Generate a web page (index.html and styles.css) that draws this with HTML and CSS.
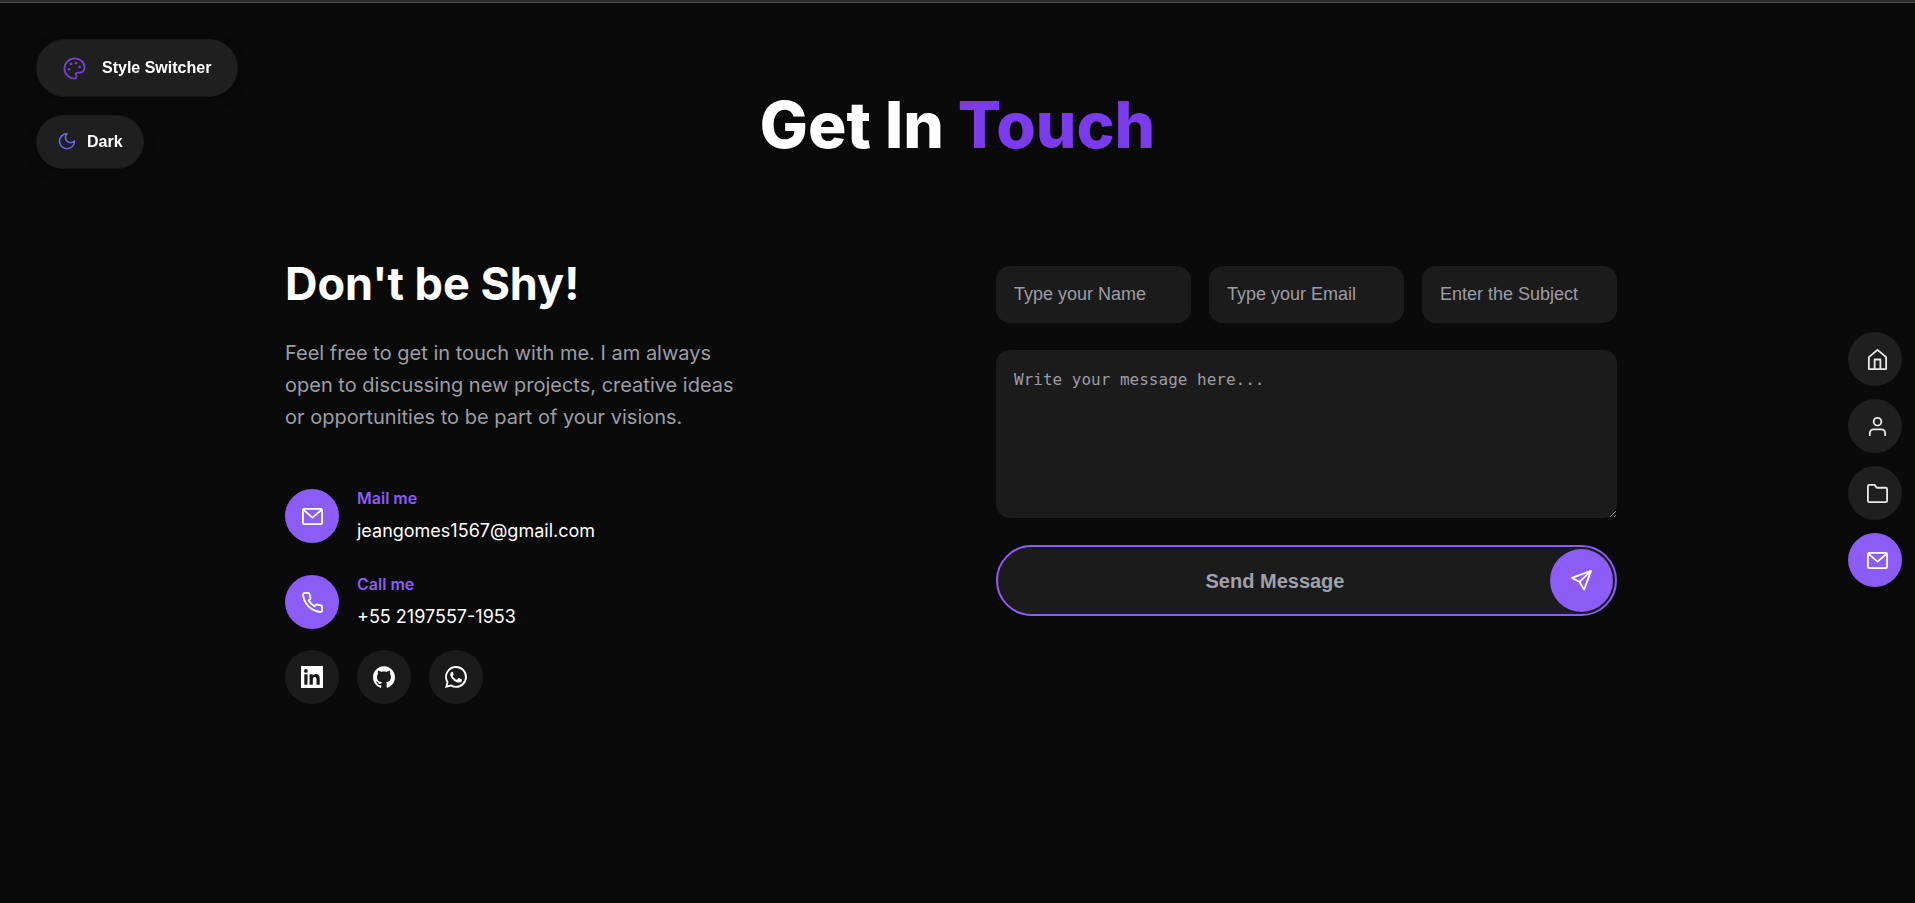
FILE: index.html
```html
<!DOCTYPE html>
<html lang="en">
<head>
<meta charset="utf-8">
<meta name="viewport" content="width=device-width, initial-scale=1">
<title>Get In Touch</title>
<link rel="stylesheet" href="styles.css">
</head>
<body>
<div class="topbar"></div>

<div class="toggles">
  <button class="toggle toggle-style" type="button">
    <svg class="icon" viewBox="0 0 24 24" aria-hidden="true"><path d="M12 22.500C6.500 22.500 1.500 18 1.500 12S6.500 1.500 12 1.500s10.500 4 10.500 9.500c0 3.200-2.300 5.300-5.500 5.300h-2c-1.500 0-2.200 1.200-1.400 2.400.9 1.400.5 3.800-1.600 3.800z"/><circle class="dot" cx="13.500" cy="6.300" r="1"/><circle class="dot" cx="17.300" cy="10.500" r="1"/><circle class="dot" cx="8.200" cy="7.300" r="1"/><circle class="dot" cx="6.300" cy="12.800" r="1"/></svg>
    <span>Style Switcher</span>
  </button>
  <button class="toggle toggle-theme" type="button">
    <svg class="icon icon-small" viewBox="0 0 24 24" aria-hidden="true"><path d="M12 2a6 6 0 0 0 9 9 9 9 0 1 1-9-9z"/></svg>
    <span>Dark</span>
  </button>
</div>

<main class="contact">
  <h1 class="title">Get In <span class="accent">Touch</span></h1>
  <div class="columns">
    <section class="info">
      <h2 class="subtitle">Don't be Shy!</h2>
      <p class="intro">Feel free to get in touch with me. I am always open to discussing new projects, creative ideas or opportunities to be part of your visions.</p>
      <div class="details">
        <div class="detail">
          <span class="badge"><svg class="icon" viewBox="0 0 24 24" aria-hidden="true"><rect x="2" y="4" width="20" height="16" rx="1.500"/><path d="M2.500 5 12 13.200 21.500 5"/></svg></span>
          <div class="detail-text">
            <span class="detail-label">Mail me</span>
            <span class="detail-value">jeangomes1567@gmail.com</span>
          </div>
        </div>
        <div class="detail">
          <span class="badge"><svg class="icon" viewBox="0 0 24 24" aria-hidden="true"><path d="M22 16.920v3a2 2 0 0 1-2.180 2 19.790 19.790 0 0 1-8.630-3.070 19.500 19.500 0 0 1-6-6 19.790 19.790 0 0 1-3.070-8.670A2 2 0 0 1 4.110 2h3a2 2 0 0 1 2 1.720c.127.960.361 1.903.7 2.810a2 2 0 0 1-.45 2.110L8.090 9.910a16 16 0 0 0 6 6l1.270-1.270a2 2 0 0 1 2.110-.45c.907.339 1.850.573 2.810.7A2 2 0 0 1 22 16.920z"/></svg></span>
          <div class="detail-text">
            <span class="detail-label">Call me</span>
            <span class="detail-value">+55 2197557-1953</span>
          </div>
        </div>
      </div>
      <div class="socials">
        <a class="social" href="#linkedin" aria-label="LinkedIn"><svg class="brand" viewBox="0 0 24 24" aria-hidden="true"><path fill-rule="evenodd" d="M.5 0h23a.5.5 0 0 1 .5.5v23a.5.5 0 0 1-.5.5H.5a.5.5 0 0 1-.5-.5V.5A.5.5 0 0 1 .5 0zM3.600 9v11.500h3.500V9zM5.340 3.300a2.060 2.060 0 1 0 0 4.120 2.060 2.060 0 0 0 0-4.120zM9.350 9v11.450h3.560v-5.600c0-1.500.3-2.900 2.100-2.900s1.880 1.700 1.880 3v5.500h3.560v-6.300c0-3.100-.7-5.430-4.270-5.430-1.700 0-2.850.93-3.320 1.820h-.05V9z"/></svg></a>
        <a class="social" href="#github" aria-label="GitHub"><svg class="brand" viewBox="0 0 24 24" aria-hidden="true"><path d="M12 .297c-6.630 0-12 5.373-12 12 0 5.303 3.438 9.800 8.205 11.385.6.113.82-.258.82-.577 0-.285-.01-1.040-.015-2.040-3.338.724-4.042-1.610-4.042-1.610C4.422 18.070 3.633 17.700 3.633 17.700c-1.087-.744.084-.729.084-.729 1.205.084 1.838 1.236 1.838 1.236 1.070 1.835 2.809 1.305 3.495.998.108-.776.417-1.305.76-1.605-2.665-.3-5.466-1.332-5.466-5.930 0-1.310.465-2.380 1.235-3.220-.135-.303-.54-1.523.105-3.176 0 0 1.005-.322 3.300 1.230.96-.267 1.980-.399 3-.405 1.020.006 2.040.138 3 .405 2.280-1.552 3.285-1.230 3.285-1.230.645 1.653.24 2.873.12 3.176.765.840 1.230 1.910 1.230 3.220 0 4.610-2.805 5.625-5.475 5.920.42.360.81 1.096.81 2.220 0 1.606-.015 2.896-.015 3.286 0 .315.21.690.825.570C20.565 22.092 24 17.592 24 12.297c0-6.627-5.373-12-12-12"/></svg></a>
        <a class="social" href="#whatsapp" aria-label="WhatsApp"><svg class="brand" viewBox="0 0 24 24" aria-hidden="true"><path fill-rule="evenodd" d="M12.050 0C5.500 0 .16 5.340.16 11.900c0 2.100.55 4.140 1.590 5.940L0 24l6.300-1.650a11.900 11.900 0 0 0 5.700 1.450c6.600 0 11.940-5.340 11.940-11.900A11.900 11.900 0 0 0 12.050 0zm0 2.100a9.800 9.800 0 1 1-.05 19.600c-1.800 0-3.500-.5-5.030-1.400l-.36-.2-3.740.98 1-3.650-.24-.37A9.800 9.800 0 0 1 12.050 2.100z"/><path d="M7.900 6.300c-.3 0-.7.100-1 .5-.4.400-1.200 1.200-1.200 2.600 0 1.500 1 3 1.300 3.300 2.300 3.300 5 4.900 8 5.400 1.500.1 3-.8 3.300-1.800.3-.9.300-1.400.1-1.600l-3.100-1.500c-.4-.1-.6-.1-.8.2l-1.100 1.400c-.3.300-.5.200-.8.100-2-.9-3.400-2.300-4.200-3.700-.1-.3 0-.5.200-.7.500-.6.900-1 .8-1.500L8.700 6.800c-.2-.4-.5-.5-.8-.5z"/></svg></a>
      </div>
    </section>

    <form class="form">
      <div class="fields">
        <input class="field" type="text" placeholder="Type your Name" aria-label="Name">
        <input class="field" type="email" placeholder="Type your Email" aria-label="Email">
        <input class="field" type="text" placeholder="Enter the Subject" aria-label="Subject">
      </div>
      <textarea class="message" placeholder="Write your message here..." aria-label="Message"></textarea>
      <button class="send" type="submit">
        <span class="send-label">Send Message</span>
        <span class="send-icon"><svg class="icon" viewBox="0 0 24 24" aria-hidden="true"><path d="M22 2 2 9.200l8 4.300L14.700 21.500zM22 2 10 13.500"/></svg></span>
      </button>
    </form>
  </div>
</main>

<nav class="nav" aria-label="Sections">
  <a class="nav-link" href="#home" aria-label="Home"><svg class="icon" viewBox="0 0 24 24" aria-hidden="true"><path d="M3 22V9.500L12 2l9 7.500V22zM9 22V12h6v10"/></svg></a>
  <a class="nav-link" href="#about" aria-label="About"><svg class="icon" viewBox="0 0 24 24" aria-hidden="true"><path d="M20 21v-2a4 4 0 0 0-4-4H8a4 4 0 0 0-4 4v2"/><circle cx="12" cy="7" r="4"/></svg></a>
  <a class="nav-link" href="#portfolio" aria-label="Portfolio"><svg class="icon" viewBox="0 0 24 24" aria-hidden="true"><path d="M22 19.500a1.500 1.500 0 0 1-1.500 1.500h-17A1.500 1.500 0 0 1 2 19.500v-15A1.500 1.500 0 0 1 3.500 3H9l2.200 3h9.300A1.500 1.500 0 0 1 22 7.500z"/></svg></a>
  <a class="nav-link is-active" href="#contact" aria-label="Contact" aria-current="page"><svg class="icon" viewBox="0 0 24 24" aria-hidden="true"><rect x="2" y="4" width="20" height="16" rx="1.500"/><path d="M2.500 5 12 13.200 21.500 5"/></svg></a>
</nav>
</body>
</html>
```
FILE: styles.css
```css
* {
  box-sizing: border-box;
}

body {
  margin: 0;
  min-height: 100vh;
  background: #0a0a0a;
  color: #fff;
  font-family: Inter, sans-serif;
}

.topbar {
  height: 3px;
  background: #2b2b2b;
  border-bottom: 1px solid #505050;
}

.icon {
  flex: none;
  width: 23px;
  height: 23px;
  fill: none;
  stroke: currentColor;
  stroke-width: 1.9;
  stroke-linecap: round;
  stroke-linejoin: round;
}

.icon-small {
  width: 20px;
  height: 20px;
}

.dot {
  fill: currentColor;
  stroke-width: 1;
}

.toggles {
  position: fixed;
  top: 39px;
  left: 36px;
  display: flex;
  flex-direction: column;
  align-items: flex-start;
  gap: 18px;
}

.toggle {
  display: flex;
  align-items: center;
  border: 1px solid #1b1b1b;
  border-radius: 30px;
  background: #1f1f1f;
  color: #fff;
  font: bold 16px/20px "Liberation Sans", Arial, sans-serif;
  box-shadow: 0 4px 12px rgba(0, 0, 0, 0.3);
}

.toggle-style {
  gap: 16px;
  padding: 18px 26px 18px 26px;
}

.toggle-style .icon {
  margin: -2px 0;
  color: #7542cf;
}

.toggle-theme {
  gap: 10px;
  padding: 16px 20px;
}

.toggle-theme .icon {
  color: #6366f1;
}

.contact {
  padding: 82px 0 40px;
}

.title {
  margin: 0;
  color: #fff;
  font-size: 64px;
  font-weight: 800;
  line-height: 80px;
  text-align: center;
}

.accent {
  color: #7c3aed;
}

.columns {
  display: grid;
  grid-template-columns: 711fr 621fr;
  margin-top: 92px;
  padding: 0 298px 0 285px;
}

.subtitle {
  margin: 0;
  font-size: 45px;
  font-weight: 700;
  line-height: 54px;
}

.intro {
  max-width: 460px;
  margin: 26px 0 0;
  color: #9d9da6;
  font-size: 20px;
  line-height: 32px;
}

.details {
  display: flex;
  flex-direction: column;
  gap: 30px;
  margin-top: 55px;
}

.detail {
  display: flex;
  align-items: center;
  gap: 18px;
}

.badge,
.social,
.nav-link {
  display: flex;
  align-items: center;
  justify-content: center;
  width: 54px;
  height: 54px;
  border-radius: 50%;
}

.badge {
  background: #8b5cf6;
}

.detail-text {
  display: flex;
  flex-direction: column;
  gap: 9px;
}

.detail-label {
  color: #8b5cf6;
  font-size: 16px;
  font-weight: 600;
  line-height: 20px;
}

.detail-value {
  font-size: 18px;
  line-height: 27px;
}

.socials {
  display: flex;
  gap: 18px;
  margin-top: 20px;
}

.social {
  background: #1b1b1b;
  color: #fff;
}

.brand {
  width: 22px;
  height: 22px;
  fill: currentColor;
}

.form {
  display: flex;
  flex-direction: column;
  gap: 27px;
  padding-top: 9px;
}

.fields {
  display: grid;
  grid-template-columns: repeat(3, 1fr);
  gap: 18px;
}

.field,
.message {
  width: 100%;
  min-width: 0;
  border: 0;
  border-radius: 14px;
  background: #1b1b1b;
  color: #fff;
}

.field {
  height: 57px;
  padding: 0 18px;
  font: 18px/20px "Liberation Sans", Arial, sans-serif;
}

.message {
  display: block;
  height: 168px;
  padding: 18px;
  font: 16px/24px "DejaVu Sans Mono", monospace;
  resize: vertical;
}

.field::placeholder,
.message::placeholder {
  color: #9d9da6;
  opacity: 1;
}

.send {
  display: flex;
  align-items: center;
  padding: 2px;
  border: 2px solid #8b5cf6;
  border-radius: 36px;
  background: #1b1b1b;
  color: #a1a1aa;
  font: bold 20px/24px "Liberation Sans", Arial, sans-serif;
}

.send-label {
  flex: 1;
}

.send-icon {
  display: flex;
  align-items: center;
  justify-content: center;
  width: 63px;
  height: 63px;
  border-radius: 50%;
  background: #8b5cf6;
  color: #fff;
}

.nav {
  position: fixed;
  top: 332px;
  right: 13px;
  display: flex;
  flex-direction: column;
  gap: 13px;
}

.nav-link {
  padding-left: 4px;
  background: #1f1f1f;
  color: #e8e8e8;
}

.nav-link.is-active {
  background: #8b5cf6;
  color: #fff;
}
```
